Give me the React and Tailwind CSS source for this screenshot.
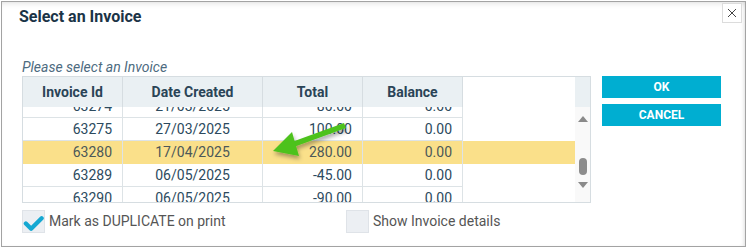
import React from "react";

const rows = [
  { id: "63274", date: "21/03/2025", total: "80.00", balance: "0.00" },
  { id: "63275", date: "27/03/2025", total: "100.00", balance: "0.00" },
  { id: "63280", date: "17/04/2025", total: "280.00", balance: "0.00", selected: true },
  { id: "63289", date: "06/05/2025", total: "-45.00", balance: "0.00" },
  { id: "63290", date: "06/05/2025", total: "-90.00", balance: "0.00" },
];

function Checkbox({ checked, label }) {
  return (
    <div className="flex items-center">
      <div className="w-[23px] h-[23px] bg-[#eceff3] border border-[#dfe3e8] flex items-center justify-center">
        {checked && (
          <svg width="22" height="18" viewBox="0 0 22 18" className="mt-[2px]">
            <path d="M3 9.5 L8.5 15 L19.5 4" fill="none" stroke="#15a8d2" strokeWidth="4.5" strokeLinecap="round" strokeLinejoin="round" />
          </svg>
        )}
      </div>
      <span className="ml-[4px] text-[14px] text-[#555555]">{label}</span>
    </div>
  );
}

export default function App() {
  return (
    <div className="w-[748px] h-[248px] bg-white relative" style={{ fontFamily: "Roboto, 'Liberation Sans', sans-serif" }}>
      <div className="absolute left-[1px] top-[1px] w-[745px] h-[246px] border border-[#a3a3a3] shadow-[inset_0_5px_6px_-4px_rgba(0,0,0,0.12),inset_-3px_0_4px_-2px_rgba(0,0,0,0.12)]">
        {/* title */}
        <div className="h-[30px] pl-[17px] pt-[4px] text-[16px] leading-[22px] font-bold text-[#1b3447]">Select an Invoice</div>
        <button className="absolute right-[3px] top-[1px] w-[20px] h-[20px] border border-[#dcdcdc] bg-white flex items-center justify-center">
          <svg width="10" height="10" viewBox="0 0 10 10">
            <path d="M1 1 L9 9 M9 1 L1 9" stroke="#444" strokeWidth="1" />
          </svg>
        </button>

        <div className="flex pl-[20px]">
          <div className="flex flex-col">
            <div className="mt-[27px] h-[17px] leading-[17px] text-[14px] italic text-[#4d6b80]">Please select an Invoice</div>
            <div className="w-[569px] border border-[#d6dde1] flex">
              <div className="flex flex-col w-[552px]">
                <div className="flex h-[30px] bg-[#eaf0f3] text-[14px] font-bold text-[#2a4457]">
                  <div className="w-[100px] flex items-center justify-center border-r border-[#d6dde1]">Invoice Id</div>
                  <div className="w-[140px] flex items-center justify-center border-r border-[#d6dde1]">Date Created</div>
                  <div className="w-[100px] flex items-center justify-center border-r border-[#d6dde1]">Total</div>
                  <div className="w-[100px] flex items-center justify-center border-r border-[#d6dde1]">Balance</div>
                  <div className="flex-1 bg-white"></div>
                </div>
                <div className="h-[95px] overflow-hidden">
                  <div className="-mt-[12px]">
                    {rows.map((r) => (
                      <div key={r.id} className={`flex h-[23px] text-[14px] ${r.selected ? "bg-[#fae08a] text-[#4c5858]" : "text-[#2c4a5e]"}`}>
                        <div className={`w-[100px] flex items-center justify-end pr-[10px] border-r border-[#dde3e6] ${r.selected ? "" : "border-b"}`}>{r.id}</div>
                        <div className={`w-[140px] flex items-center justify-center border-r border-[#dde3e6] ${r.selected ? "" : "border-b"}`}>{r.date}</div>
                        <div className={`w-[100px] flex items-center justify-end pr-[10px] border-r border-[#dde3e6] ${r.selected ? "" : "border-b"}`}>{r.total}</div>
                        <div className={`w-[100px] flex items-center justify-end pr-[10px] border-r border-[#dde3e6] ${r.selected ? "" : "border-b"}`}>{r.balance}</div>
                        <div className="flex-1"></div>
                      </div>
                    ))}
                  </div>
                </div>
              </div>
              <div className="w-[15px] flex flex-col">
                <div className="h-[30px] bg-[#eaf0f3]"></div>
                <div className="flex-1 bg-[#f9f9f9] flex flex-col items-center pt-[9px]">
                  <svg width="10" height="6" viewBox="0 0 10 6"><path d="M0 6 L5 0 L10 6 Z" fill="#8a8a8a" /></svg>
                  <div className="mt-[36px] w-[8px] h-[17px] rounded-full bg-[#8c8c8c]"></div>
                  <svg className="mt-[7px]" width="10" height="6" viewBox="0 0 10 6"><path d="M0 0 L10 0 L5 6 Z" fill="#8a8a8a" /></svg>
                </div>
              </div>
            </div>
            <div className="flex mt-[7px]">
              <div className="w-[324px]"><Checkbox checked label="Mark as DUPLICATE on print" /></div>
              <Checkbox label="Show Invoice details" />
            </div>
          </div>

          <div className="flex flex-col ml-[11px] mt-[44px] gap-[6px]">
            <button className="w-[119px] h-[22px] bg-[#00aed1] text-white text-[12px] font-bold">OK</button>
            <button className="w-[119px] h-[22px] bg-[#00aed1] text-white text-[12px] font-bold">CANCEL</button>
          </div>
        </div>
      </div>

      <svg className="absolute left-0 top-0 pointer-events-none" width="748" height="248">
        <defs>
          <filter id="sh" x="-20%" y="-20%" width="150%" height="150%">
            <feDropShadow dx="1" dy="3" stdDeviation="2" floodColor="#000" floodOpacity="0.35" />
          </filter>
        </defs>
        <g filter="url(#sh)">
          <path d="M344 123 L346 128 L291 148 L289 143 Z" fill="#4dc21e" />
          <path d="M273 151 L292 132 L299 156 Z" fill="#4dc21e" />
        </g>
      </svg>
    </div>
  );
}
